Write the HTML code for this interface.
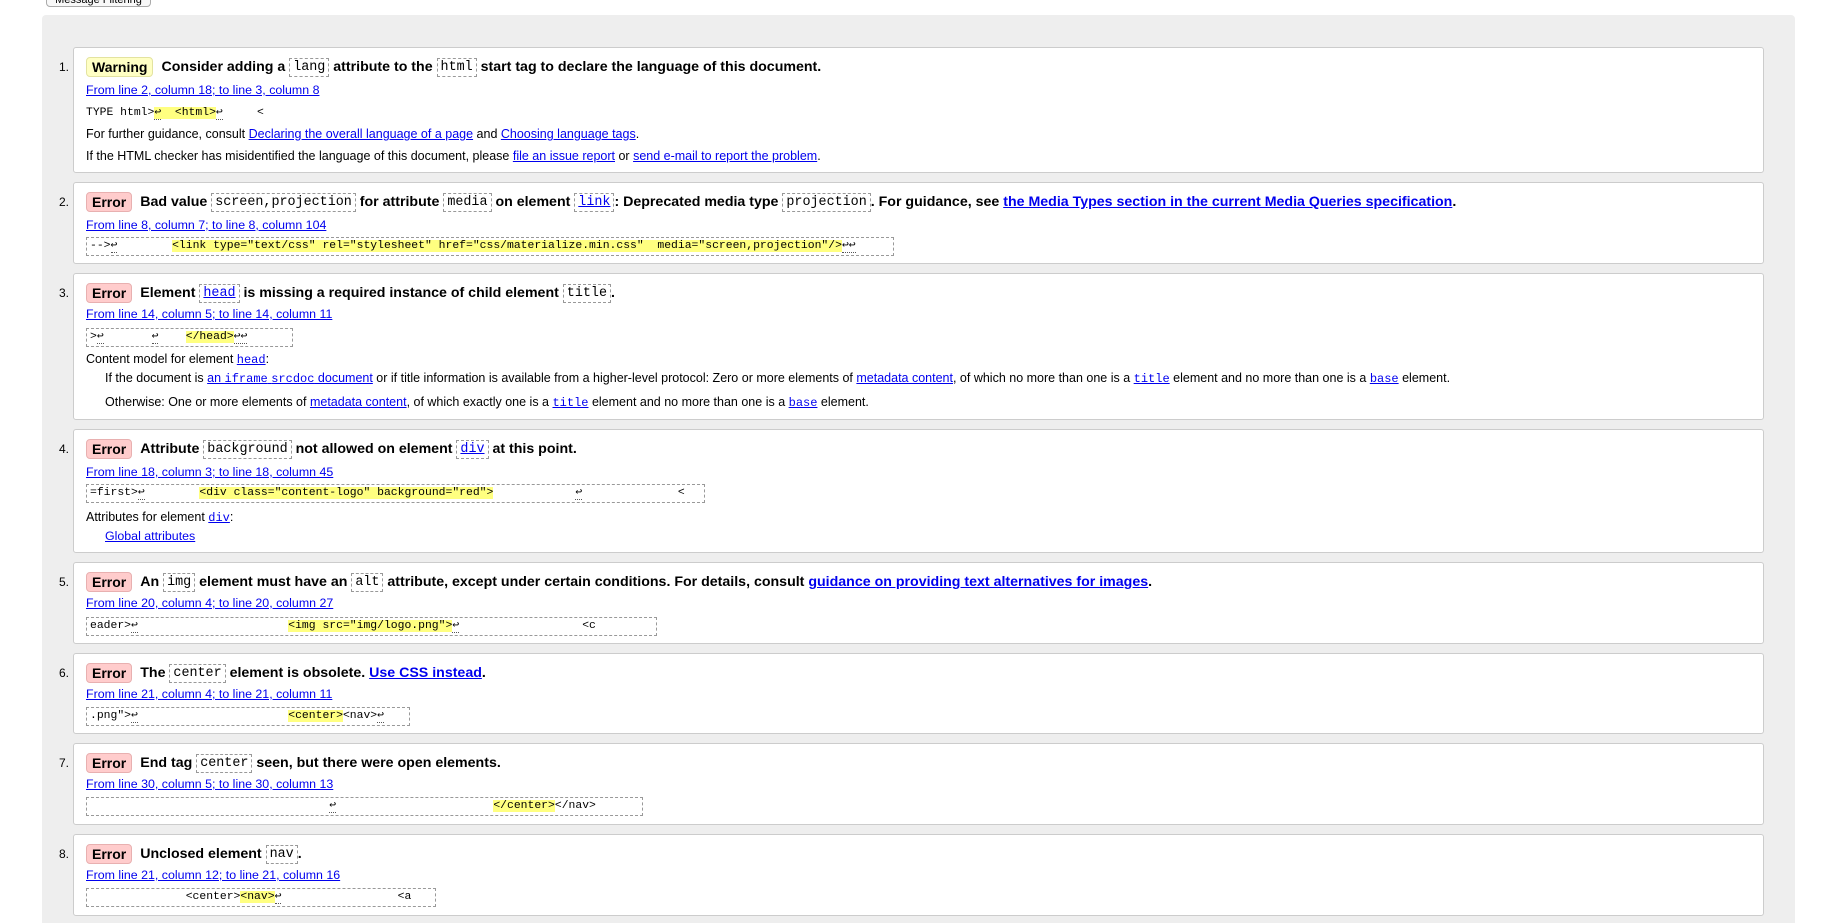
<!DOCTYPE html>
<html><head><meta charset="utf-8"><style>
html,body{margin:0;width:1831px;height:923px;overflow:hidden}
body{background:#fff;font-family:"Liberation Sans",Arial,sans-serif;font-size:12.5px;color:#000;position:relative}
a{color:#00e;text-decoration:underline}
.btn{position:absolute;left:46px;top:-14px;width:105px;height:21px;border:1px solid #aaa;border-radius:4px;background:#f8f8f8;font-size:11px;text-align:center;line-height:26px;box-sizing:border-box}
.panel{position:absolute;left:42px;top:15px;width:1753px;height:908px;background:#eee;border-radius:4px 4px 0 0}
.card{position:absolute;left:73px;width:1691px;background:#fff;border:1px solid #ccc;border-radius:3px;box-sizing:border-box}
.num{position:absolute;left:-15px;font-size:12px;line-height:18px}
.ln{position:absolute;left:12px;white-space:nowrap;line-height:18px}
.lk{font-size:12.4px}
.t{font-weight:bold;font-size:14.2px;line-height:22px}
.b{display:inline-block;font-weight:bold;font-size:14px;padding:0 5px;border-radius:4px;line-height:18px;margin-right:8px;vertical-align:middle}
.w{background:#ffffc4;border:1px solid #e3e3a0}
.e{background:#ffcccc;border:1px solid #e8b0b0}
.c{font-family:"Liberation Mono",monospace;font-weight:normal;font-size:13.4px;border:1px dashed #999;padding:1px 3px;line-height:17px;vertical-align:middle}
.m{font-family:"Liberation Mono",monospace;font-size:12px}
.box{position:absolute;left:12px;height:19px;border:1px dashed #999;box-sizing:border-box;white-space:pre;font-family:"Liberation Mono",monospace;font-size:11.4px;line-height:17px;padding-left:3px;overflow:hidden}
.h{background:#ffff80}
.r{border-bottom:1px dotted #555}
</style></head><body>
<div class="btn">Message Filtering</div>
<div class="panel"></div>

<div class="card" style="top:47px;height:126px">
<div class="num" style="top:10px">1.</div>
<div class="ln t" style="top:8px"><span class="b w">Warning</span>Consider adding a <span class="c">lang</span> attribute to the <span class="c">html</span> start tag to declare the language of this document.</div>
<div class="ln lk" style="top:33px"><a>From line 2, column 18; to line 3, column 8</a></div>
<div class="ln m" style="top:56px;white-space:pre;font-size:11.4px">TYPE html&gt;<span class="h"><span class="r">↩</span>  &lt;html&gt;</span><span class="r">↩</span>     &lt;</div>
<div class="ln" style="top:77px">For further guidance, consult <a>Declaring the overall language of a page</a> and <a>Choosing language tags</a>.</div>
<div class="ln" style="top:99px">If the HTML checker has misidentified the language of this document, please <a>file an issue report</a> or <a>send e-mail to report the problem</a>.</div>
</div>

<div class="card" style="top:182px;height:82px">
<div class="num" style="top:10px">2.</div>
<div class="ln t" style="top:8px"><span class="b e">Error</span>Bad value <span class="c">screen,projection</span> for attribute <span class="c">media</span> on element <span class="c"><a>link</a></span>: Deprecated media type <span class="c">projection</span>. For guidance, see <a>the Media Types section in the current Media Queries specification</a>.</div>
<div class="ln lk" style="top:33px"><a>From line 8, column 7; to line 8, column 104</a></div>
<div class="box" style="top:54px;width:808px">--&gt;<span class="r">↩</span>        <span class="h">&lt;link type="text/css" rel="stylesheet" href="css/materialize.min.css"  media="screen,projection"/&gt;</span><span class="r">↩↩</span></div>
</div>

<div class="card" style="top:273px;height:147px">
<div class="num" style="top:10px">3.</div>
<div class="ln t" style="top:8px"><span class="b e">Error</span>Element <span class="c"><a>head</a></span> is missing a required instance of child element <span class="c">title</span>.</div>
<div class="ln lk" style="top:31px"><a>From line 14, column 5; to line 14, column 11</a></div>
<div class="box" style="top:54px;width:207px">&gt;<span class="r">↩</span>       <span class="r">↩</span>    <span class="h">&lt;/head&gt;</span><span class="r">↩↩</span></div>
<div class="ln" style="top:76px">Content model for element <a class="m">head</a>:</div>
<div class="ln" style="top:95px;left:31px">If the document is <a>an <span class="m">iframe</span> <span class="m">srcdoc</span> document</a> or if title information is available from a higher-level protocol: Zero or more elements of <a>metadata content</a>, of which no more than one is a <a class="m">title</a> element and no more than one is a <a class="m">base</a> element.</div>
<div class="ln" style="top:119px;left:31px">Otherwise: One or more elements of <a>metadata content</a>, of which exactly one is a <a class="m">title</a> element and no more than one is a <a class="m">base</a> element.</div>
</div>

<div class="card" style="top:429px;height:124px">
<div class="num" style="top:10px">4.</div>
<div class="ln t" style="top:8px"><span class="b e">Error</span>Attribute <span class="c">background</span> not allowed on element <span class="c"><a>div</a></span> at this point.</div>
<div class="ln lk" style="top:33px"><a>From line 18, column 3; to line 18, column 45</a></div>
<div class="box" style="top:54px;width:619px">=first&gt;<span class="r">↩</span>        <span class="h">&lt;div class="content-logo" background="red"&gt;</span>            <span class="r">↩</span>              &lt;</div>
<div class="ln" style="top:78px">Attributes for element <a class="m">div</a>:</div>
<div class="ln lk" style="top:97px;left:31px"><a>Global attributes</a></div>
</div>

<div class="card" style="top:562px;height:82px">
<div class="num" style="top:10px">5.</div>
<div class="ln t" style="top:8px"><span class="b e">Error</span>An <span class="c">img</span> element must have an <span class="c">alt</span> attribute, except under certain conditions. For details, consult <a>guidance on providing text alternatives for images</a>.</div>
<div class="ln lk" style="top:31px"><a>From line 20, column 4; to line 20, column 27</a></div>
<div class="box" style="top:54px;width:571px">eader&gt;<span class="r">↩</span>                      <span class="h">&lt;img src="img/logo.png"&gt;</span><span class="r">↩</span>                  &lt;c</div>
</div>

<div class="card" style="top:653px;height:81px">
<div class="num" style="top:10px">6.</div>
<div class="ln t" style="top:8px"><span class="b e">Error</span>The <span class="c">center</span> element is obsolete. <a>Use CSS instead</a>.</div>
<div class="ln lk" style="top:31px"><a>From line 21, column 4; to line 21, column 11</a></div>
<div class="box" style="top:53px;width:324px">.png"&gt;<span class="r">↩</span>                      <span class="h">&lt;center&gt;</span>&lt;nav&gt;<span class="r">↩</span></div>
</div>

<div class="card" style="top:743px;height:82px">
<div class="num" style="top:10px">7.</div>
<div class="ln t" style="top:8px"><span class="b e">Error</span>End tag <span class="c">center</span> seen, but there were open elements.</div>
<div class="ln lk" style="top:31px"><a>From line 30, column 5; to line 30, column 13</a></div>
<div class="box" style="top:53px;width:557px">                                   <span class="r">↩</span>                       <span class="h">&lt;/center&gt;</span>&lt;/nav&gt;</div>
</div>

<div class="card" style="top:834px;height:82px">
<div class="num" style="top:10px">8.</div>
<div class="ln t" style="top:8px"><span class="b e">Error</span>Unclosed element <span class="c">nav</span>.</div>
<div class="ln lk" style="top:31px"><a>From line 21, column 12; to line 21, column 16</a></div>
<div class="box" style="top:53px;width:350px">              &lt;center&gt;<span class="h">&lt;nav&gt;</span><span class="r">↩</span>                 &lt;a</div>
</div>
</body></html>
